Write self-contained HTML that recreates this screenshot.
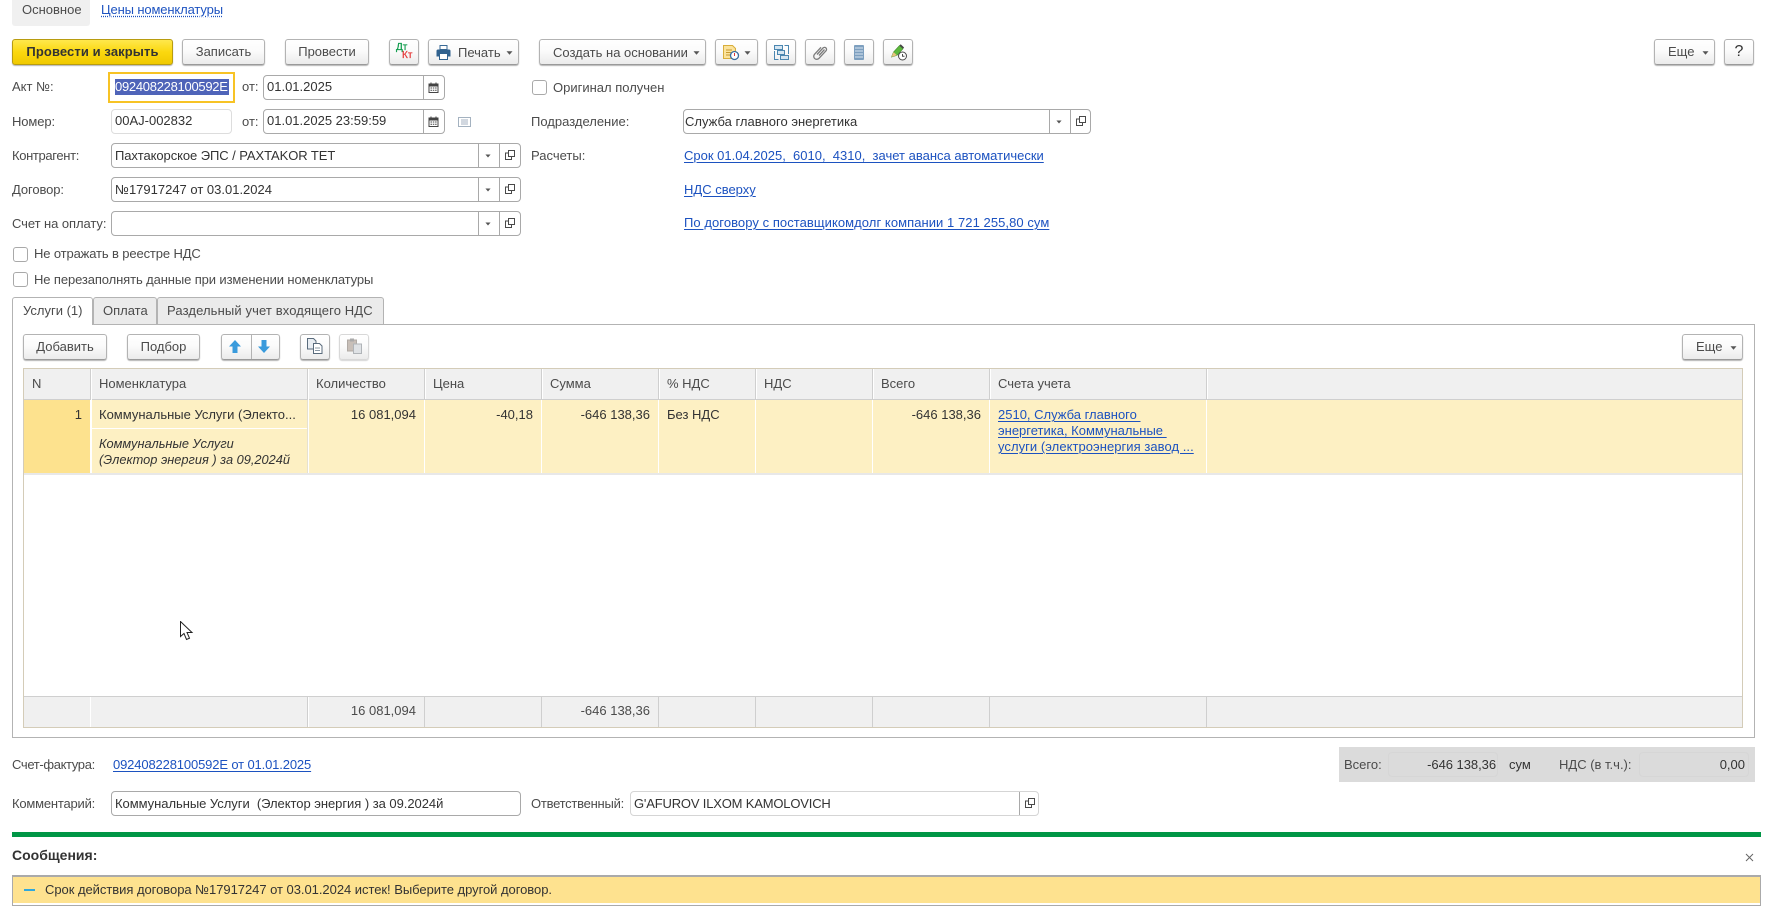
<!DOCTYPE html>
<html lang="ru"><head><meta charset="utf-8"><title>Акт</title>
<style>
html,body{margin:0;padding:0;background:#fff}
#p{position:relative;width:1769px;height:910px;overflow:hidden;background:#fff;font:13px/16px "Liberation Sans",Arial,sans-serif;color:#4b4b4b}
#p div,#p span.t,#p svg{position:absolute}
.t{position:absolute;white-space:pre;line-height:16px;height:16px}
.d{color:#333}
.l{color:#1c52c0;text-decoration:underline;text-underline-offset:2px;text-decoration-thickness:1px}
.r{text-align:right}
.b{border:1px solid #b3b3b3;border-bottom-color:#9a9a9a;border-radius:3px;background:linear-gradient(#fff,#fbfbfb 45%,#ebebeb);box-shadow:0 1px 1px #b5b5b5;box-sizing:border-box;height:26px;top:39px;color:#4b4b4b;text-align:center;line-height:24px;white-space:pre}
.i{border:1px solid #a9a9a9;border-radius:4px;box-sizing:border-box;height:25px;background:#fff}
.s{width:1px;top:0;bottom:0;background:#a9a9a9}
.c{border:1px solid #a9a9a9;border-radius:3px;width:15px;height:15px;box-sizing:border-box;background:#fff}
.tab{box-sizing:border-box;border:1px solid #b3b3b3;border-bottom:0;border-radius:3px 3px 0 0;background:#ebebeb;height:27px;top:297px}
.h{background:#f0f0f0}
.v{width:1px;background:#fff}
.g{width:1px;background:#cfcfcf}
</style></head><body>
<svg width="0" height="0" style="position:absolute"><defs>
<symbol id="cal" viewBox="0 0 11 11"><path d="M1 2h9v8.500H1z" fill="#fff" stroke="#444" stroke-width="1"/><path d="M1 2h9v2.500H1z" fill="#444"/><path d="M3 .5v2M8 .5v2" stroke="#444"/><path d="M2.500 6h1.500M4.800 6h1.500M7.100 6h1.500M2.500 8.200h1.500M4.800 8.200h1.500M7.100 8.200h1.500" stroke="#444"/></symbol>
<symbol id="arr" viewBox="0 0 7 4"><path d="M.5 .2h6L3.500 3.700z" fill="#555"/></symbol>
<symbol id="open" viewBox="0 0 10 10"><path d="M3.500 .5h6v6h-6z" fill="#fff" stroke="#4a4a4a"/><path d="M3.500 3H.5v6.500h6V6.500" fill="none" stroke="#4a4a4a"/></symbol>
</defs></svg>
<div id="p">
<!-- top tabs -->
<div style="left:12px;top:0;width:78px;height:26px;background:#f0f0f0;border-radius:0 0 3px 3px"></div>
<span class="t" style="left:22px;top:2px">Основное</span>
<span class="t" style="left:101px;top:2px;letter-spacing:-.13px;color:#1c52c0;text-decoration:underline dotted;text-underline-offset:2px">Цены номенклатуры</span>

<!-- command bar -->
<div class="b" style="left:12px;width:161px;background:linear-gradient(#ffe84d,#fbd80f 50%,#f0c900);border-color:#b89c10;color:#333;font-weight:bold;letter-spacing:.1px">Провести и закрыть</div>
<div class="b" style="left:182px;width:83px">Записать</div>
<div class="b" style="left:285px;width:84px">Провести</div>
<div class="b" style="left:389px;width:30px"></div>
<span class="t" style="left:396px;top:42px;font-size:10px;line-height:12px;height:12px;color:#0a9a48;-webkit-text-stroke:.25px #0a9a48">Дт</span>
<span class="t" style="left:402px;top:50px;font-size:10px;line-height:12px;height:12px;color:#e53c3c;-webkit-text-stroke:.25px #e53c3c">Кт</span>
<div class="b" style="left:428px;width:91px"></div>
<svg style="left:436px;top:45px" width="15" height="15" viewBox="0 0 15 15"><path d="M4 .5h7v4H4z" fill="#fff" stroke="#3a6a96"/><path d="M.5 6a1.500 1.500 0 0 1 1.500-1.500h11A1.500 1.500 0 0 1 14.500 6v5.500H.5z" fill="#31628f"/><path d="M3.500 8.500h8v6h-8z" fill="#fff" stroke="#31628f"/></svg>
<span class="t" style="left:458px;top:45px">Печать</span>
<svg style="left:506px;top:51px" width="7" height="4"><use href="#arr"/></svg>
<div class="b" style="left:539px;width:167px"></div>
<span class="t" style="left:553px;top:45px">Создать на основании</span>
<svg style="left:693px;top:51px" width="7" height="4"><use href="#arr"/></svg>
<div class="b" style="left:715px;width:43px"></div>
<svg style="left:722px;top:44px" width="18" height="17" viewBox="0 0 18 17"><path d="M1.500 1.500h9l3 3v10h-12z" fill="#fbe39c" stroke="#d8ae3c"/><path d="M4 6h6M4 8.500h5M4 11h4" stroke="#c79a30"/><circle cx="12.500" cy="11.500" r="4" fill="#fff" stroke="#3c6ea0" stroke-width="1.300"/><path d="M12.500 9v3" stroke="#d33"/></svg>
<svg style="left:744px;top:51px" width="7" height="4"><use href="#arr"/></svg>
<div class="b" style="left:766px;width:30px"></div>
<svg style="left:774px;top:45px" width="15" height="15" viewBox="0 0 15 15" fill="none" stroke="#4a86b0"><path d="M.5 .5h8v4h-8z" fill="#d5e6f2"/><path d="M3.500 5.500h7v4h-7z" fill="#d5e6f2"/><path d="M6.500 10.500h8v4h-8z" fill="#d5e6f2"/><path d="M.5 6v8.500h4M10.500 .5h4V9"/></svg>
<div class="b" style="left:805px;width:30px"></div>
<svg style="left:813px;top:45px" width="15" height="15" viewBox="0 0 15 15" fill="none" stroke="#7c7c7c" stroke-width="1.300"><path d="M4 9.500l6-6.500a2 2 0 0 1 3 2.800l-7 7.500a3 3 0 0 1-4.500-4l6.500-7"/><path d="M6 10.500l5.500-6"/></svg>
<div class="b" style="left:844px;width:30px"></div>
<svg style="left:854px;top:45px" width="10" height="15" viewBox="0 0 10 15"><rect width="10" height="15" rx="1" fill="#7d9fbf"/><path d="M1 3h8M1 6h8M1 9h8M1 12h8" stroke="#d9e6f0"/></svg>
<div class="b" style="left:883px;width:30px"></div>
<svg style="left:891px;top:44px" width="16" height="17" viewBox="0 0 16 17"><path d="M.5 13l2-5 6-6.500 3.500 3.300-6 6.500z" fill="#5cb83c" stroke="#3f8a2a" stroke-width=".6"/><path d="M8.500 1.500l1.200-1.200 3.400 3.200-1.100 1.300z" fill="#444"/><path d="M.5 13l2-5 3.500 3.300z" fill="#e9c27e"/><circle cx="11.500" cy="12" r="4" fill="#fff" stroke="#4a4a4a"/><path d="M11.500 10v2.300h2" stroke="#4a4a4a" fill="none"/></svg>
<div class="b" style="left:1654px;width:61px;text-align:left;padding-left:13px">Еще</div>
<svg style="left:1702px;top:51px" width="7" height="4"><use href="#arr"/></svg>
<div class="b" style="left:1724px;width:30px;color:#333;font-size:16px">?</div>

<!-- form rows -->
<span class="t" style="left:12px;top:79px">Акт №:</span>
<div style="left:108px;top:72px;width:127px;height:31px;box-sizing:border-box;border:2px solid #f7c325"></div>
<div style="left:115px;top:79px;width:114px;height:16px;background:#4f64b9"></div>
<span class="t" style="left:115px;top:79px;color:#fff;letter-spacing:-.28px">092408228100592E</span>
<span class="t" style="left:242px;top:79px">от:</span>
<div class="i" style="left:263px;top:75px;width:182px"><div class="s" style="left:159px"></div></div>
<span class="t d" style="left:267px;top:79px">01.01.2025</span>
<svg style="left:428px;top:82px" width="11" height="11"><use href="#cal"/></svg>

<span class="t" style="left:12px;top:114px;letter-spacing:-.1px">Номер:</span>
<div class="i" style="left:111px;top:109px;width:121px;border-color:#ddd"></div>
<span class="t d" style="left:115px;top:113px">00AJ-002832</span>
<span class="t" style="left:242px;top:114px">от:</span>
<div class="i" style="left:263px;top:109px;width:182px"><div class="s" style="left:159px"></div></div>
<span class="t d" style="left:267px;top:113px">01.01.2025 23:59:59</span>
<svg style="left:428px;top:116px" width="11" height="11"><use href="#cal"/></svg>
<svg style="left:458px;top:117px" width="13" height="10" viewBox="0 0 13 10" fill="none" stroke="#a4b2c0"><path d="M.5 .5h12v9H.5z" fill="#fff"/><path d="M3 3h7M3 5h7M3 7h7" stroke="#a4b2c0"/></svg>

<span class="t" style="left:12px;top:148px;letter-spacing:-.35px">Контрагент:</span>
<div class="i" style="left:111px;top:143px;width:410px"><div class="s" style="left:366px"></div><div class="s" style="left:387px"></div></div>
<span class="t d" style="left:115px;top:148px;letter-spacing:-.07px">Пахтакорское ЭПС / PAXTAKOR TET</span>
<svg style="left:485px;top:154px" width="6" height="4"><use href="#arr"/></svg>
<svg style="left:505px;top:150px" width="10" height="10"><use href="#open"/></svg>

<span class="t" style="left:12px;top:182px;letter-spacing:-.1px">Договор:</span>
<div class="i" style="left:111px;top:177px;width:410px"><div class="s" style="left:366px"></div><div class="s" style="left:387px"></div></div>
<span class="t d" style="left:115px;top:182px">№17917247 от 03.01.2024</span>
<svg style="left:485px;top:188px" width="6" height="4"><use href="#arr"/></svg>
<svg style="left:505px;top:184px" width="10" height="10"><use href="#open"/></svg>

<span class="t" style="left:12px;top:216px;letter-spacing:-.07px">Счет на оплату:</span>
<div class="i" style="left:111px;top:211px;width:410px"><div class="s" style="left:366px"></div><div class="s" style="left:387px"></div></div>
<svg style="left:485px;top:222px" width="6" height="4"><use href="#arr"/></svg>
<svg style="left:505px;top:218px" width="10" height="10"><use href="#open"/></svg>

<div class="c" style="left:13px;top:247px"></div>
<span class="t" style="left:34px;top:246px;letter-spacing:-.13px">Не отражать в реестре НДС</span>
<div class="c" style="left:13px;top:272px"></div>
<span class="t" style="left:34px;top:272px;letter-spacing:-.11px">Не перезаполнять данные при изменении номенклатуры</span>

<div class="c" style="left:532px;top:80px"></div>
<span class="t" style="left:553px;top:80px">Оригинал получен</span>
<span class="t" style="left:531px;top:114px">Подразделение:</span>
<div class="i" style="left:683px;top:109px;width:408px"><div class="s" style="left:365px"></div><div class="s" style="left:386px"></div></div>
<span class="t d" style="left:685px;top:114px">Служба главного энергетика</span>
<svg style="left:1056px;top:120px" width="6" height="4"><use href="#arr"/></svg>
<svg style="left:1076px;top:116px" width="10" height="10"><use href="#open"/></svg>
<span class="t" style="left:531px;top:148px">Расчеты:</span>
<span class="t l" style="left:684px;top:148px">Срок 01.04.2025,  6010,  4310,  зачет аванса автоматически</span>
<span class="t l" style="left:684px;top:182px">НДС сверху</span>
<span class="t l" style="left:684px;top:215px;letter-spacing:.06px">По договору с поставщикомдолг компании 1 721 255,80 сум</span>

<!-- panel -->
<div style="left:12px;top:324px;width:1743px;height:414px;box-sizing:border-box;border:1px solid #b3b3b3"></div>
<div class="tab" style="left:12px;width:81px;background:#fff;height:28px;z-index:2"></div>
<div class="tab" style="left:93px;width:64px"></div>
<div class="tab" style="left:157px;width:227px"></div>
<span class="t" style="left:23px;top:303px;z-index:3">Услуги (1)</span>
<span class="t" style="left:103px;top:303px">Оплата</span>
<span class="t" style="left:167px;top:303px;letter-spacing:.12px">Раздельный учет входящего НДС</span>

<div class="b" style="left:23px;top:334px;width:84px">Добавить</div>
<div class="b" style="left:127px;top:334px;width:73px">Подбор</div>
<div class="b" style="left:221px;top:334px;width:59px"><div style="left:29px;top:0;bottom:0;width:1px;background:#b3b3b3"></div></div>
<svg style="left:229px;top:340px" width="12" height="13" viewBox="0 0 12 13"><path d="M6 0l6 6.500H8.500V13h-5V6.500H0z" fill="#3a9bdc"/></svg>
<svg style="left:258px;top:340px" width="12" height="13" viewBox="0 0 12 13"><path d="M6 13L0 6.500h3.500V0h5v6.500H12z" fill="#3a9bdc"/></svg>
<div class="b" style="left:300px;top:334px;width:30px"></div>
<svg style="left:307px;top:338px" width="16" height="16" viewBox="0 0 16 16"><path d="M.5 .5h6l2.500 2.500v8H.5z" fill="#e8edf2" stroke="#596b7c"/><path d="M6.500 5.500h6l2.500 2.500v7.500H6.500z" fill="#fff" stroke="#596b7c"/><path d="M8 10h5M8 12.500h5" stroke="#8a98a5"/></svg>
<div class="b" style="left:339px;top:334px;width:30px;border-color:#d8d8d8;box-shadow:0 1px 1px #d5d5d5"></div>
<svg style="left:347px;top:338px" width="15" height="16" viewBox="0 0 15 16"><path d="M.5 2h9v11h-9z" fill="#c8bfb8" stroke="#b0aaa5"/><path d="M3 .5h4v3H3z" fill="#aaa"/><path d="M6.500 6h8v9.500h-8z" fill="#dfe2e5" stroke="#b0b4b8"/></svg>
<div class="b" style="left:1682px;top:334px;width:61px;text-align:left;padding-left:13px">Еще</div>
<svg style="left:1730px;top:346px" width="7" height="4"><use href="#arr"/></svg>

<!-- table -->
<div style="left:23px;top:368px;width:1720px;height:360px;box-sizing:border-box;border:1px solid #d4ccb8"></div>
<div class="h" style="left:24px;top:369px;width:1718px;height:30px"></div>
<div style="left:24px;top:399px;width:1718px;height:1px;background:#cfcfcf"></div>
<div style="left:24px;top:400px;width:1718px;height:73px;background:#fdf0c3"></div>
<div style="left:24px;top:400px;width:66px;height:73px;background:#fde28e"></div>
<div style="left:91px;top:428px;width:216px;height:1px;background:#fff"></div>
<div style="left:24px;top:473px;width:1718px;height:2px;background:#e8e8e8"></div>
<div style="left:24px;top:696px;width:1718px;height:1px;background:#cfcfcf"></div>
<div class="h" style="left:24px;top:697px;width:1718px;height:30px"></div>
<!-- column lines -->
<div class="g" style="left:90px;top:369px;height:30px"></div><div class="v" style="left:91px;top:369px;height:104px"></div><div class="v" style="left:90px;top:400px;height:73px"></div><div class="v" style="left:90px;top:697px;height:30px"></div>
<div class="g" style="left:307px;top:369px;height:30px"></div><div class="g" style="left:307px;top:400px;height:73px;background:#e6e1d0"></div><div class="v" style="left:308px;top:369px;height:104px"></div><div class="g" style="left:307px;top:697px;height:30px"></div><div class="v" style="left:308px;top:697px;height:30px"></div>
<div class="g" style="left:424px;top:369px;height:30px"></div><div class="v" style="left:424px;top:400px;height:73px"></div><div class="g" style="left:424px;top:697px;height:30px"></div><div class="v" style="left:425px;top:369px;height:30px"></div>
<div class="g" style="left:541px;top:369px;height:30px"></div><div class="v" style="left:541px;top:400px;height:73px"></div><div class="g" style="left:541px;top:697px;height:30px"></div><div class="v" style="left:542px;top:369px;height:30px"></div>
<div class="g" style="left:658px;top:369px;height:30px"></div><div class="v" style="left:658px;top:400px;height:73px"></div><div class="g" style="left:658px;top:697px;height:30px"></div><div class="v" style="left:659px;top:369px;height:30px"></div>
<div class="g" style="left:755px;top:369px;height:30px"></div><div class="v" style="left:755px;top:400px;height:73px"></div><div class="g" style="left:755px;top:697px;height:30px"></div><div class="v" style="left:756px;top:369px;height:30px"></div>
<div class="g" style="left:872px;top:369px;height:30px"></div><div class="v" style="left:872px;top:400px;height:73px"></div><div class="g" style="left:872px;top:697px;height:30px"></div><div class="v" style="left:873px;top:369px;height:30px"></div>
<div class="g" style="left:989px;top:369px;height:30px"></div><div class="v" style="left:989px;top:400px;height:73px"></div><div class="g" style="left:989px;top:697px;height:30px"></div><div class="v" style="left:990px;top:369px;height:30px"></div>
<div class="g" style="left:1206px;top:369px;height:30px"></div><div class="v" style="left:1206px;top:400px;height:73px"></div><div class="g" style="left:1206px;top:697px;height:30px"></div><div class="v" style="left:1207px;top:369px;height:30px"></div>

<span class="t" style="left:32px;top:376px">N</span>
<span class="t" style="left:99px;top:376px">Номенклатура</span>
<span class="t" style="left:316px;top:376px">Количество</span>
<span class="t" style="left:433px;top:376px">Цена</span>
<span class="t" style="left:550px;top:376px">Сумма</span>
<span class="t" style="left:667px;top:376px">% НДС</span>
<span class="t" style="left:764px;top:376px">НДС</span>
<span class="t" style="left:881px;top:376px">Всего</span>
<span class="t" style="left:998px;top:376px">Счета учета</span>

<span class="t d r" style="left:40px;width:42px;top:407px">1</span>
<span class="t d" style="left:99px;top:407px">Коммунальные Услуги (Электо...</span>
<span class="t d" style="left:99px;top:436px;font-style:italic;font-size:12.800px">Коммунальные Услуги</span>
<span class="t d" style="left:99px;top:452px;font-style:italic;font-size:12.800px">(Электор энергия ) за 09,2024й</span>
<span class="t d r" style="left:316px;width:100px;top:407px">16 081,094</span>
<span class="t d r" style="left:433px;width:100px;top:407px">-40,18</span>
<span class="t d r" style="left:550px;width:100px;top:407px">-646 138,36</span>
<span class="t d" style="left:667px;top:407px">Без НДС</span>
<span class="t d r" style="left:881px;width:100px;top:407px">-646 138,36</span>
<span class="t l" style="left:998px;top:407px">2510, Служба главного </span>
<span class="t l" style="left:998px;top:423px">энергетика, Коммунальные </span>
<span class="t l" style="left:998px;top:439px;letter-spacing:.05px">услуги (электроэнергия завод ...</span>

<span class="t r" style="left:316px;width:100px;top:703px">16 081,094</span>
<span class="t r" style="left:550px;width:100px;top:703px">-646 138,36</span>

<!-- cursor -->
<svg style="left:180px;top:621px" width="14" height="20" viewBox="0 0 14 20"><path d="M.5 .5v15l3.500-3 2.500 6 3-1.300-2.500-5.700h5z" fill="#fff" stroke="#222"/></svg>

<!-- bottom -->
<span class="t" style="left:12px;top:757px;letter-spacing:-.35px">Счет-фактура:</span>
<span class="t l" style="left:113px;top:757px;letter-spacing:-.14px">092408228100592E от 01.01.2025</span>
<div style="left:1339px;top:747px;width:416px;height:35px;background:#dbdbdb"></div>
<div style="left:1388px;top:752px;width:110px;height:25px;box-sizing:border-box;border:1px solid #d6d6d6;border-radius:4px"></div>
<div style="left:1639px;top:752px;width:110px;height:25px;box-sizing:border-box;border:1px solid #d6d6d6;border-radius:4px"></div>
<span class="t" style="left:1344px;top:757px">Всего:</span>
<span class="t d r" style="left:1396px;width:100px;top:757px;letter-spacing:-.05px">-646 138,36</span>
<span class="t d" style="left:1509px;top:757px">сум</span>
<span class="t" style="left:1559px;top:757px">НДС (в т.ч.):</span>
<span class="t d r" style="left:1645px;width:100px;top:757px">0,00</span>

<span class="t" style="left:12px;top:796px;letter-spacing:-.2px">Комментарий:</span>
<div class="i" style="left:111px;top:791px;width:410px"></div>
<span class="t d" style="left:115px;top:796px;letter-spacing:-.04px">Коммунальные Услуги  (Электор энергия ) за 09.2024й</span>
<span class="t" style="left:531px;top:796px;letter-spacing:-.25px">Ответственный:</span>
<div class="i" style="left:630px;top:791px;width:409px;border-color:#d5d5d5"><div class="s" style="left:388px;background:#a9a9a9"></div></div>
<span class="t d" style="left:634px;top:796px;letter-spacing:-.18px">G'AFUROV ILXOM KAMOLOVICH</span>
<svg style="left:1025px;top:798px" width="10" height="10"><use href="#open"/></svg>

<div style="left:12px;top:832px;width:1749px;height:5px;background:#009646"></div>
<span class="t" style="left:12px;top:847px;font-weight:bold;font-size:14px;color:#333">Сообщения:</span>
<svg style="left:1745px;top:853px" width="9" height="9" viewBox="0 0 9 9"><path d="M1 1l7 7M8 1L1 8" stroke="#666"/></svg>
<div style="left:12px;top:875px;width:1749px;height:31px;box-sizing:border-box;border:1px solid #aaa;border-top-width:2px;background:#fff"></div>
<div style="left:13px;top:877px;width:1747px;height:26px;background:#fee28f"></div>
<div style="left:24px;top:889px;width:11px;height:2px;background:#30a8dc"></div>
<span class="t d" style="left:45px;top:882px;letter-spacing:-.04px">Срок действия договора №17917247 от 03.01.2024 истек! Выберите другой договор.</span>
</div>
</body></html>
